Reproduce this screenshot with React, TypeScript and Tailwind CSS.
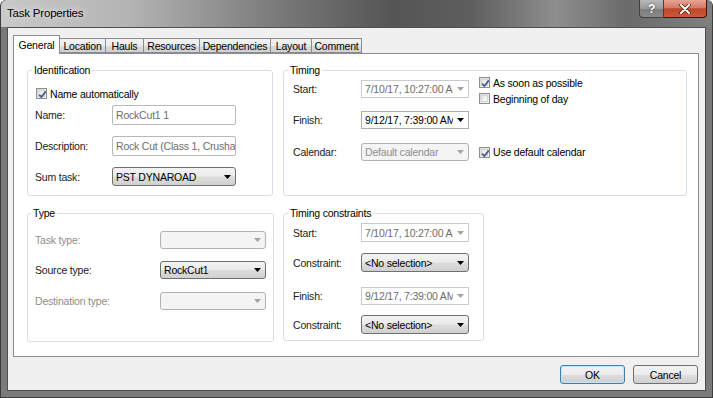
import React from 'react';

const Arrow = ({ disabled = false }: { disabled?: boolean }) => (
    <div className="w-[15px] h-full shrink-0 flex items-center justify-center">
        <svg width="7" height="4" viewBox="0 0 7 4">
            <polygon points="0,0 7,0 3.5,4" fill={disabled ? '#a3a3a3' : '#000'} />
        </svg>
    </div>
);

const CheckBox = ({ checked }: { checked: boolean }) => (
    <div className="w-[11px] h-[11px] shrink-0 border border-[#8e8f8f] bg-[linear-gradient(135deg,#dadada,#f6f6f6)] p-px">
        <div className="w-full h-full border border-[#d4d4d4] bg-[linear-gradient(135deg,#e4e4e4,#ffffff)] relative">
            {checked && (
                <svg width="11" height="11" viewBox="0 0 11 11" className="absolute -left-[2px] -top-[2px]">
                    <path d="M2.2 5.6 L4.4 8 L8.8 2.4" fill="none" stroke="#4a5f97" strokeWidth="1.8" />
                </svg>
            )}
        </div>
    </div>
);

const CheckRow = ({ checked, label, className = '' }: { checked: boolean, label: string, className?: string }) => (
    <div className={`flex items-center gap-[3px] h-[11px] ${className}`}>
        <CheckBox checked={checked} />
        <span className="whitespace-nowrap">{label}</span>
    </div>
);

type FieldKind = 'combo' | 'comboDisabled' | 'picker' | 'pickerDisabled' | 'text';

const Field = ({ kind, value = '', width, height = 18 }: {
    kind: FieldKind,
    value?: string,
    width: number,
    height?: number
}) => {
    const styles: Record<FieldKind, string> = {
        combo: 'border-[#707070] rounded-[3px] bg-[linear-gradient(#f3f3f3_0%,#ebebeb_48%,#dddddd_52%,#d0d0d0_100%)] text-black',
        comboDisabled: 'border-[#adb2b5] rounded-[3px] bg-[#f4f4f4] text-[#8d8d8d]',
        picker: 'border-[#abadb3] bg-white text-black',
        pickerDisabled: 'border-[#c8ccd2] bg-white text-[#6d6d6d]',
        text: 'border-[#b5b8bd] rounded-[2px] bg-white text-[#6d6d6d] pr-0',
    };
    return (
        <div className={`flex items-center border shrink-0 overflow-hidden pl-[3px] ${styles[kind]}`}
             style={{ width, height }}>
            <span className="flex-1 whitespace-nowrap overflow-hidden">{value}</span>
            {kind !== 'text' && <Arrow disabled={kind === 'comboDisabled' || kind === 'pickerDisabled'} />}
        </div>
    );
};

const Group = ({ title, height, padX, legendShift, children }: {
    title: string,
    height: number,
    padX: string,
    legendShift: string,
    children: React.ReactNode
}) => (
    <fieldset className={`border border-[#d5dfe5] rounded-[3px] ${padX}`} style={{ height }}>
        <legend className={`px-[2px] leading-[14px] ${legendShift}`}>{title}</legend>
        {children}
    </fieldset>
);

const Row = ({ label, labelWidth, mt, disabled = false, children }: {
    label: string,
    labelWidth: string,
    mt: string,
    disabled?: boolean,
    children: React.ReactNode
}) => (
    <div className={`flex items-center ${mt}`}>
        <div className={`${labelWidth} shrink-0 ${disabled ? 'text-[#8d8d8d]' : 'text-[#1a1a1a]'}`}>{label}</div>
        {children}
    </div>
);

const tabs = [
    { name: 'Location', w: 'w-[46px]' },
    { name: 'Hauls', w: 'w-[38px]' },
    { name: 'Resources', w: 'w-[56px]' },
    { name: 'Dependencies', w: 'w-[71px]' },
    { name: 'Layout', w: 'w-[41px]' },
    { name: 'Comment', w: 'w-[50px]' },
];

const TitleBar = () => (
    <div className="h-[27px] flex items-start justify-between rounded-t-[6px] bg-[linear-gradient(90deg,#c9c9c9_0%,#b4b4b4_18%,#7c7c7c_38%,#555555_55%,#5e5e5e_66%,#8e8e8e_78%,#6b6b6b_88%,#808080_100%)]">
        <div className="pl-[6px] pt-[6px] text-[11.5px] text-black [text-shadow:0_0_6px_#ffffff]">Task Properties</div>
        <div className="flex mr-[5px]">
            <div className="w-[25px] h-[18px] flex items-center justify-center rounded-bl-[4px] border border-t-0 border-[#404040] bg-[linear-gradient(#b9b9b9_0%,#9a9a9a_50%,#7e7e7e_51%,#8a8a8a_100%)] text-white font-bold text-[12px] [text-shadow:0_0_2px_#333]">?</div>
            <div className="w-[43px] h-[18px] flex items-center justify-center rounded-br-[4px] border border-l-0 border-t-0 border-[#40150d] bg-[linear-gradient(#e6a595_0%,#d27a64_45%,#c0452a_52%,#c95a3b_100%)]">
                <svg width="12" height="10" viewBox="0 0 12 10">
                    <path d="M2 1 L10 9 M10 1 L2 9" stroke="#3a1a12" strokeWidth="3.4" strokeLinecap="round" />
                    <path d="M2 1 L10 9 M10 1 L2 9" stroke="#ffffff" strokeWidth="2" strokeLinecap="round" />
                </svg>
            </div>
        </div>
    </div>
);

const App = () => {
    return (
        <div className="w-[713px] h-[398px] flex flex-col bg-[#7a7a7a] border border-t-0 border-[#3c3c3c] rounded-t-[6px] font-['Liberation_Sans',Arial,sans-serif] text-[10.5px] leading-[14px] tracking-[-0.2px] text-black">
            <TitleBar />
            <div className="flex-1 px-[6px] pb-[6px]">
                <div className="h-[364px] border border-[#4f4f4f] bg-[#f0f0f0] flex flex-col">
                    {/* tabs */}
                    <div className="flex items-end h-[19px] mt-[6px] pl-[5px]">
                        <div className="w-[47px] h-[19px] border border-b-0 border-[#898c95] bg-white flex items-center justify-center relative z-10 -mb-px pb-px">General</div>
                        {tabs.map(tab => (
                            <div key={tab.name}
                                 className={`${tab.w} h-[15px] border border-l-0 border-[#898c95] bg-[linear-gradient(#f2f2f2,#ebebeb_50%,#dddddd_51%,#cfcfcf)] flex items-center justify-center`}>
                                {tab.name}
                            </div>
                        ))}
                    </div>
                    {/* panel */}
                    <div className="ml-[5px] mr-[6px] h-[304px] border border-[#898c95] bg-white flex gap-[10px] pl-[13px] pt-[9px]">
                        <div className="w-[246px] flex flex-col gap-[10px]">
                            <Group title="Identification" height={133} padX="px-[7px]" legendShift="-ml-[3px]">
                                <CheckRow checked label="Name automatically" className="mt-[11px] ml-px" />
                                <Row label="Name:" labelWidth="w-[77px]" mt="mt-[6px]">
                                    <Field kind="text" value="RockCut1 1" width={124} height={20} />
                                </Row>
                                <Row label="Description:" labelWidth="w-[77px]" mt="mt-[11px]">
                                    <Field kind="text" value="Rock Cut (Class 1, Crushable)" width={124} height={20} />
                                </Row>
                                <Row label="Sum task:" labelWidth="w-[77px]" mt="mt-[11px]">
                                    <Field kind="combo" value="PST DYNAROAD" width={124} height={19} />
                                </Row>
                            </Group>
                            <Group title="Type" height={136} padX="px-[7px]" legendShift="-ml-[4px]">
                                <Row label="Task type:" labelWidth="w-[125px]" mt="mt-[11px]" disabled>
                                    <Field kind="comboDisabled" width={106} />
                                </Row>
                                <Row label="Source type:" labelWidth="w-[125px]" mt="mt-[12px]">
                                    <Field kind="combo" value="RockCut1" width={106} />
                                </Row>
                                <Row label="Destination type:" labelWidth="w-[125px]" mt="mt-[13px]" disabled>
                                    <Field kind="comboDisabled" width={106} />
                                </Row>
                            </Group>
                        </div>
                        <div className="w-[404px] flex flex-col gap-[10px]">
                            <Group title="Timing" height={133} padX="px-[9px]" legendShift="-ml-[5px]">
                                <div className="flex items-start">
                                    <div className="flex items-center mt-[3px]">
                                        <div className="w-[68px] shrink-0 text-[#1a1a1a]">Start:</div>
                                        <Field kind="pickerDisabled" value="7/10/17, 10:27:00 AM" width={108} />
                                    </div>
                                    <div className="flex flex-col gap-[5px] ml-[10px]">
                                        <CheckRow checked label="As soon as possible" />
                                        <CheckRow checked={false} label="Beginning of day" />
                                    </div>
                                </div>
                                <Row label="Finish:" labelWidth="w-[68px]" mt="mt-[7px]">
                                    <Field kind="picker" value="9/12/17, 7:39:00 AM" width={108} />
                                </Row>
                                <Row label="Calendar:" labelWidth="w-[68px]" mt="mt-[14px]">
                                    <Field kind="comboDisabled" value="Default calendar" width={108} />
                                    <CheckRow checked label="Use default calendar" className="ml-[10px]" />
                                </Row>
                            </Group>
                            <div className="w-[201px]">
                                <Group title="Timing constraints" height={135} padX="px-[9px]" legendShift="-ml-[5px]">
                                    <Row label="Start:" labelWidth="w-[68px]" mt="mt-[3px]">
                                        <Field kind="pickerDisabled" value="7/10/17, 10:27:00 AM" width={108} height={19} />
                                    </Row>
                                    <Row label="Constraint:" labelWidth="w-[68px]" mt="mt-[11px]">
                                        <Field kind="combo" value="<No selection>" width={108} height={19} />
                                    </Row>
                                    <Row label="Finish:" labelWidth="w-[68px]" mt="mt-[15px]">
                                        <Field kind="pickerDisabled" value="9/12/17, 7:39:00 AM" width={108} />
                                    </Row>
                                    <Row label="Constraint:" labelWidth="w-[68px]" mt="mt-[10px]">
                                        <Field kind="combo" value="<No selection>" width={108} height={19} />
                                    </Row>
                                </Group>
                            </div>
                        </div>
                    </div>
                    {/* buttons */}
                    <div className="flex justify-end gap-[8px] mt-[8px] mr-[7px]">
                        <div className="w-[65px] h-[19px] rounded-[3px] border border-[#3c7fb1] shadow-[inset_0_0_0_1px_#bfe6f9] bg-[linear-gradient(#f2f2f2,#ebebeb_50%,#dddddd_51%,#cfcfcf)] flex items-center justify-center">OK</div>
                        <div className="w-[65px] h-[19px] rounded-[3px] border border-[#707070] bg-[linear-gradient(#f2f2f2,#ebebeb_50%,#dddddd_51%,#cfcfcf)] flex items-center justify-center">Cancel</div>
                    </div>
                </div>
            </div>
        </div>
    );
};

export default App;
